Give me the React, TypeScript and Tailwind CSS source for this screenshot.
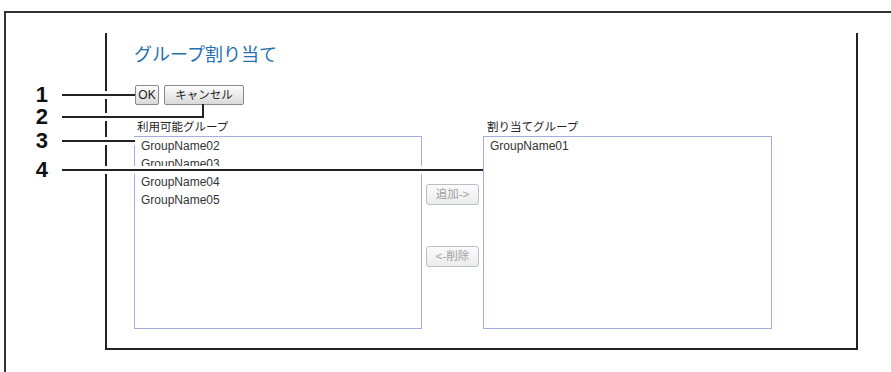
import React from 'react';

const jp = "font-['Liberation_Sans','Noto_Sans_CJK_JP',sans-serif]";

function Callout({ n, top, width }: { n: string; top: number; width: number }) {
  return (
    <div className="flex items-center h-[18px]" style={{ position: 'absolute', left: 34, top }}>
      <span className="w-[14px] text-right text-[22px] leading-[18px] font-bold text-[#111] font-['Liberation_Sans',sans-serif]">
        {n}
      </span>
      {/* leader line with a white halo above and below */}
      <div
        className="ml-[14px] h-[8px] border-y-[3px] border-white bg-[#222] bg-clip-content"
        style={{ width }}
      />
    </div>
  );
}

function ListBox({ items }: { items: string[] }) {
  return (
    <div className="h-[193px] border border-[#a3aedd] bg-white px-[6px]">
      {items.map((it) => (
        <div key={it} className="h-[18px] leading-[18px] text-[12px] text-[#333] font-['Liberation_Sans',sans-serif]">
          {it}
        </div>
      ))}
    </div>
  );
}

function MoveButton({ label, className }: { label: string; className: string }) {
  return (
    <button
      disabled
      className={`ml-[4px] w-[53px] h-[21px] rounded-[3px] border border-[#b9bec8] bg-gradient-to-b from-[#fbfbfb] to-[#ececec] text-[11.5px] leading-[19px] text-[#a0a0a0] ${jp} ${className}`}
    >
      {label}
    </button>
  );
}

export default function App() {
  return (
    <div className="relative w-[891px] h-[372px] overflow-hidden bg-white">
      {/* outer frame */}
      <div className="ml-[4px] mt-[11px] w-[1000px] h-[400px] border-l-2 border-t-2 border-[#333] pl-[99px] pt-[20px]">
        {/* dialog panel */}
        <div className="w-[753px] h-[317px] border-l-2 border-r-2 border-b-2 border-[#222] pl-[27px] pt-[10px]">
          <h1 className={`h-[24px] text-[18px] leading-[24px] text-[#2470b0] ${jp}`}>グループ割り当て</h1>

          <div className="mt-[18px] ml-[1px] flex gap-[5px]">
            <button className="w-[24px] h-[20px] rounded-[2px] border border-[#8a8a8a] bg-gradient-to-b from-[#fdfdfd] to-[#d9d9d9] text-[12px] leading-[18px] text-[#222] font-['Liberation_Sans',sans-serif]">
              OK
            </button>
            <button className={`w-[80px] h-[20px] rounded-[2px] border border-[#8a8a8a] bg-gradient-to-b from-[#fdfdfd] to-[#d9d9d9] text-[11.5px] leading-[18px] text-[#222] ${jp}`}>
              キャンセル
            </button>
          </div>

          <div className="mt-[13px] flex">
            <div className="w-[288px]">
              <div className={`h-[18px] pl-[3px] text-[11.5px] leading-[18px] text-[#222] ${jp}`}>利用可能グループ</div>
              <ListBox items={['GroupName02', 'GroupName03', 'GroupName04', 'GroupName05']} />
            </div>
            <div className="w-[61px] flex flex-col items-start">
              <MoveButton label="追加->" className="mt-[66px]" />
              <MoveButton label="<-削除" className="mt-[41px]" />
            </div>
            <div className="w-[289px]">
              <div className={`h-[18px] pl-[4px] text-[11.5px] leading-[18px] text-[#222] ${jp}`}>割り当てグループ</div>
              <ListBox items={['GroupName01']} />
            </div>
          </div>
        </div>
      </div>

      {/* callouts */}
      <Callout n="1" top={86} width={73} />
      <Callout n="2" top={108} width={142} />
      <div className="absolute left-[202px] top-[104px] w-[2px] h-[14px] bg-[#222]" />
      <Callout n="3" top={132} width={73} />
      <Callout n="4" top={161} width={421} />
    </div>
  );
}
